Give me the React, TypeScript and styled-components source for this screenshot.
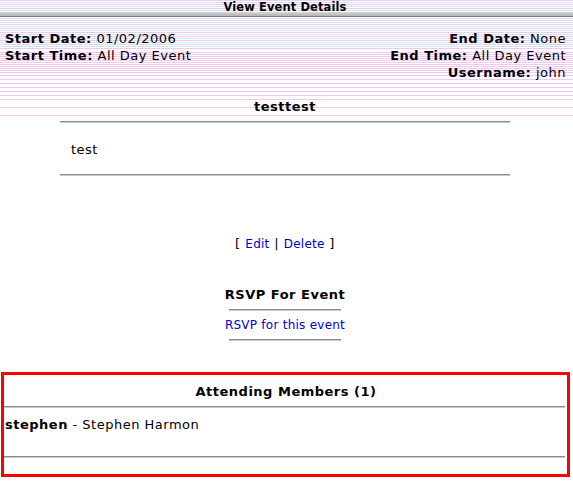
import React from "react";
import styled, { createGlobalStyle } from "styled-components";

const PINK = "#f1c8f1";
const CYAN = "#c9e6f0";

const buildStripes = (): string => {
  const lines: [number, string][] = [];
  for (let y = 0; y < 50; y++) {
    if (y % 4 === 0) lines.push([y, PINK]);
    else if (y % 4 === 2) lines.push([y, CYAN]);
  }
  for (let y = 52; y <= 72; y += 2) lines.push([y, PINK]);
  for (let y = 75; y <= 99; y += 4) lines.push([y, PINK]);
  lines.push([107, PINK]);
  lines.push([115, PINK]);
  const stops: string[] = ["transparent 0px"];
  lines.forEach(([y, c]) => {
    stops.push(`transparent ${y}px`, `${c} ${y}px`, `${c} ${y + 1}px`, `transparent ${y + 1}px`);
  });
  stops.push("transparent 100%");
  return `linear-gradient(to bottom, ${stops.join(", ")})`;
};

const STRIPES = buildStripes();

const GlobalStyle = createGlobalStyle`
  html, body {
    margin: 0;
    padding: 0;
    background: #ffffff;
  }
  body {
    font-family: "DejaVu Sans", Verdana, "Liberation Sans", sans-serif;
    font-size: 13px;
    line-height: 17px;
    letter-spacing: 0.5px;
    color: #000000;
  }
`;

const Page = styled.div`
  width: 570px;
  display: flex;
  flex-direction: column;
`;

const TopSection = styled.header`
  width: 573px;
  background-color: #ffffff;
  background-image: ${STRIPES};
  background-repeat: no-repeat;
  padding-bottom: 2px;
`;

const TitleBar = styled.div`
  height: 12px;
  padding-right: 3px;
  font-size: 11.5px;
  line-height: 14px;
  letter-spacing: 0.1px;
  font-weight: bold;
  text-align: center;
`;

const GreyBand = styled.div`
  height: 4px;
  background: linear-gradient(to bottom, #d6d6d6, #b4b4b4);
  border-bottom: 1px solid #7a7a7a;
`;

const InfoGrid = styled.div`
  display: grid;
  grid-template-columns: 1fr 1fr;
  padding: 13px 7px 0 5px;
`;

const InfoColumn = styled.div<{ $align: "left" | "right" }>`
  display: flex;
  flex-direction: column;
  text-align: ${(p) => p.$align};
`;

const Field = styled.div`
  white-space: nowrap;
`;

const Label = styled.b`
  font-weight: bold;
`;

const SectionTitle = styled.div<{ $top?: number; $right?: number }>`
  font-weight: bold;
  text-align: center;
  margin-top: ${(p) => p.$top ?? 0}px;
  padding-right: ${(p) => p.$right ?? 0}px;
`;

const Rule = styled.hr<{ $width?: string }>`
  width: ${(p) => p.$width ?? "100%"};
  height: 0;
  margin: 0;
  border: 0;
  border-top: 1px solid #8a8a8a;
  border-bottom: 1px solid #cacaca;
  align-self: center;
`;

const DescriptionBox = styled.section`
  width: 450px;
  margin: 4px 0 0 60px;
  display: flex;
  flex-direction: column;
`;

const DescriptionBody = styled.div`
  padding: 18px 11px 16px;
`;

const Actions = styled.div`
  margin-top: 59px;
  height: 17px;
  text-align: center;
`;

const Link = styled.a`
  color: #0000cc;
  font-size: 12px;
  line-height: 12px;
  letter-spacing: 0.25px;
  text-decoration: none;
  cursor: pointer;
`;

const RsvpSection = styled.section`
  margin-top: 34px;
  display: flex;
  flex-direction: column;
  align-items: center;
`;

const Spacer = styled.div<{ $h: number }>`
  height: ${(p) => p.$h}px;
`;

const RsvpLine = styled.div`
  margin: 5px 0 6px;
  height: 17px;
  text-align: center;
`;

const AttendingBox = styled.section`
  margin: 31px 0 0 1px;
  border: 3px solid #ff0000;
  padding: 8px 0 16px 1px;
  display: flex;
  flex-direction: column;
`;

const AttendingRule = styled(Rule)`
  margin-right: 2px;
  margin-left: -1px;
  width: auto;
  align-self: stretch;
`;

const Member = styled.div`
  margin: 8px 0 23px;
`;

export default function App() {
  return (
    <Page>
      <GlobalStyle />
      <TopSection>
        <TitleBar>View Event Details</TitleBar>
        <GreyBand />
        <InfoGrid>
          <InfoColumn $align="left">
            <Field>
              <Label>Start Date:</Label> 01/02/2006
            </Field>
            <Field>
              <Label>Start Time:</Label> All Day Event
            </Field>
          </InfoColumn>
          <InfoColumn $align="right">
            <Field>
              <Label>End Date:</Label> None
            </Field>
            <Field>
              <Label>End Time:</Label> All Day Event
            </Field>
            <Field>
              <Label>Username:</Label> john
            </Field>
          </InfoColumn>
        </InfoGrid>
        <SectionTitle $top={17} $right={3}>testtest</SectionTitle>
      </TopSection>

      <DescriptionBox>
        <Rule />
        <DescriptionBody>test</DescriptionBody>
        <Rule />
      </DescriptionBox>

      <Actions>
        [ <Link>Edit</Link> | <Link>Delete</Link> ]
      </Actions>

      <RsvpSection>
        <SectionTitle>RSVP For Event</SectionTitle>
        <Spacer $h={6} />
        <Rule $width="112px" />
        <RsvpLine>
          <Link>RSVP for this event</Link>
        </RsvpLine>
        <Rule $width="112px" />
      </RsvpSection>

      <AttendingBox>
        <SectionTitle>Attending Members (1)</SectionTitle>
        <Spacer $h={6} />
        <AttendingRule />
        <Member>
          <Label>stephen</Label> - Stephen Harmon
        </Member>
        <AttendingRule />
      </AttendingBox>
    </Page>
  );
}
